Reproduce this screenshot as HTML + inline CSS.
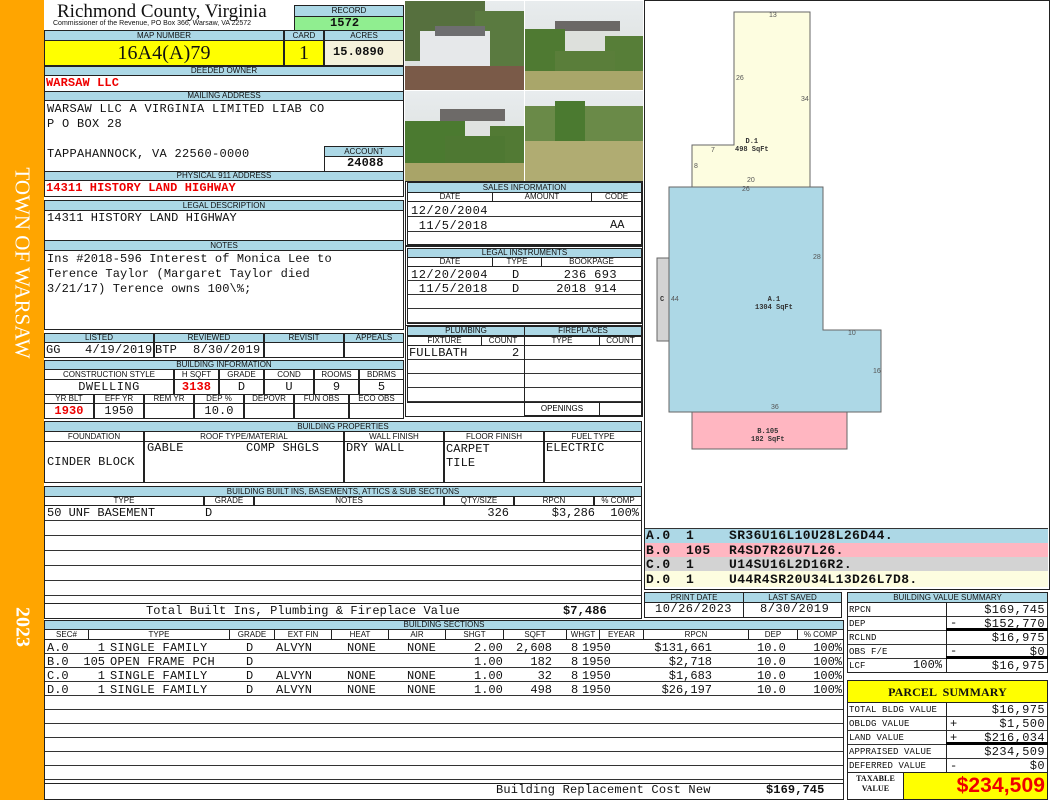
<!DOCTYPE html>
<html><head><meta charset="utf-8"><style>
*{margin:0;padding:0}
body{width:1050px;height:800px;position:relative;overflow:hidden;background:#fff;font-family:"Liberation Mono",monospace}
.a{position:absolute;box-sizing:border-box}
.h{position:absolute;box-sizing:border-box;background:#acd8e6;border:1px solid #222;font:8px/8px "Liberation Sans",sans-serif;text-align:center;color:#111;overflow:hidden}
.w{background:#fff}
.b{position:absolute;box-sizing:border-box;border:1px solid #222;background:#fff}
.t{position:absolute;font:12px/13px "Liberation Mono",monospace;letter-spacing:0.1px;white-space:pre;color:#111}
.r{color:#e00;font-weight:bold}
.s{position:absolute;font:bold 7px "Liberation Mono",monospace;color:#333;white-space:pre;text-align:center}
.n{position:absolute;font:7px "Liberation Sans",sans-serif;color:#555}
.row{position:absolute;left:0;width:1050px;height:14px}
.row span{position:absolute;font:12px/14px "Liberation Mono",monospace;white-space:pre;color:#111}
.rr{text-align:right}
</style></head><body>
<!-- sidebar -->
<div class="a" style="left:0;top:0;width:44px;height:800px;background:#ffa500"></div>
<div class="a" style="left:22px;top:263px;width:0;height:0"><div style="position:absolute;transform:translate(-50%,-50%) rotate(90deg);font:21px 'Liberation Serif',serif;color:#fff;white-space:nowrap">TOWN OF WARSAW</div></div>
<div class="a" style="left:22px;top:627px;width:0;height:0"><div style="position:absolute;transform:translate(-50%,-50%) rotate(90deg);font:bold 20px 'Liberation Serif',serif;color:#fff;white-space:nowrap">2023</div></div>

<!-- header -->
<div class="t" style="left:57px;top:2px;font:19px/20px 'Liberation Serif',serif;letter-spacing:0">Richmond County, Virginia</div>
<div class="t" style="left:53px;top:20px;font:7px/8px 'Liberation Sans',sans-serif;letter-spacing:0">Commissioner of the Revenue, PO Box 366, Warsaw, VA 22572</div>
<div class="h" style="left:294px;top:5px;width:110px;height:12px;line-height:10px">RECORD</div>
<div class="b" style="left:294px;top:16px;width:110px;height:15px;background:#90ee90"></div>
<div class="t" style="left:330px;top:17px;font-weight:bold">1572</div>

<div class="h" style="left:44px;top:30px;width:240px;height:11px;line-height:9px">MAP NUMBER</div>
<div class="h" style="left:284px;top:30px;width:40px;height:11px;line-height:9px">CARD</div>
<div class="h" style="left:324px;top:30px;width:80px;height:11px;line-height:9px">ACRES</div>
<div class="b" style="left:44px;top:40px;width:240px;height:26px;background:#ffff00"></div>
<div class="b" style="left:284px;top:40px;width:40px;height:26px;background:#ffff00"></div>
<div class="b" style="left:324px;top:40px;width:80px;height:26px;background:#f5f2dc"></div>
<div class="t" style="left:44px;width:240px;top:42px;font:20px/22px 'Liberation Serif',serif;text-align:center">16A4(A)79</div>
<div class="t" style="left:284px;width:40px;top:42px;font:20px/22px 'Liberation Serif',serif;text-align:center">1</div>
<div class="t" style="left:333px;top:46px;font-weight:bold;font-size:12px">15.0890</div>

<div class="h" style="left:44px;top:66px;width:360px;height:10px">DEEDED OWNER</div>
<div class="b" style="left:44px;top:75px;width:360px;height:17px"></div>
<div class="t r" style="left:46px;top:77px">WARSAW LLC</div>
<div class="h" style="left:44px;top:91px;width:360px;height:10px">MAILING ADDRESS</div>
<div class="b" style="left:44px;top:100px;width:360px;height:72px"></div>
<div class="t" style="left:47px;top:102px;line-height:15px;letter-spacing:0.3px">WARSAW LLC A VIRGINIA LIMITED LIAB CO
P O BOX 28

TAPPAHANNOCK, VA 22560-0000</div>
<div class="h" style="left:324px;top:146px;width:80px;height:11px;line-height:9px">ACCOUNT</div>
<div class="b" style="left:324px;top:156px;width:80px;height:16px"></div>
<div class="t" style="left:347px;top:157px;font-weight:bold">24088</div>
<div class="h" style="left:44px;top:171px;width:360px;height:10px">PHYSICAL 911 ADDRESS</div>
<div class="b" style="left:44px;top:180px;width:360px;height:17px"></div>
<div class="t r" style="left:46px;top:182px">14311 HISTORY LAND HIGHWAY</div>

<div class="h" style="left:44px;top:200px;width:360px;height:11px;line-height:9px">LEGAL DESCRIPTION</div>
<div class="b" style="left:44px;top:210px;width:360px;height:31px"></div>
<div class="t" style="left:47px;top:212px">14311 HISTORY LAND HIGHWAY</div>
<div class="h" style="left:44px;top:240px;width:360px;height:11px;line-height:9px">NOTES</div>
<div class="b" style="left:44px;top:250px;width:360px;height:80px"></div>
<div class="t" style="left:47px;top:252px;line-height:15px">Ins #2018-596 Interest of Monica Lee to
Terence Taylor (Margaret Taylor died
3/21/17) Terence owns 100\%;</div>

<!-- listed -->
<div class="h" style="left:44px;top:333px;width:110px;height:10px">LISTED</div>
<div class="h" style="left:154px;top:333px;width:110px;height:10px">REVIEWED</div>
<div class="h" style="left:264px;top:333px;width:80px;height:10px">REVISIT</div>
<div class="h" style="left:344px;top:333px;width:60px;height:10px">APPEALS</div>
<div class="b" style="left:44px;top:342px;width:110px;height:16px"></div>
<div class="b" style="left:154px;top:342px;width:110px;height:16px"></div>
<div class="b" style="left:264px;top:342px;width:80px;height:16px"></div>
<div class="b" style="left:344px;top:342px;width:60px;height:16px"></div>
<div class="t" style="left:46px;top:344px">GG</div>
<div class="t" style="left:85px;top:344px;letter-spacing:0.3px">4/19/2019</div>
<div class="t" style="left:155px;top:344px">BTP</div>
<div class="t" style="left:193px;top:344px;letter-spacing:0.3px">8/30/2019</div>

<!-- building info -->
<div class="h" style="left:44px;top:360px;width:360px;height:10px">BUILDING INFORMATION</div>
<div class="h w" style="left:44px;top:369px;width:130px;height:11px;line-height:9px">CONSTRUCTION STYLE</div>
<div class="h w" style="left:174px;top:369px;width:45px;height:11px;line-height:9px">H SQFT</div>
<div class="h w" style="left:219px;top:369px;width:45px;height:11px;line-height:9px">GRADE</div>
<div class="h w" style="left:264px;top:369px;width:50px;height:11px;line-height:9px">COND</div>
<div class="h w" style="left:314px;top:369px;width:45px;height:11px;line-height:9px">ROOMS</div>
<div class="h w" style="left:359px;top:369px;width:45px;height:11px;line-height:9px">BDRMS</div>
<div class="b" style="left:44px;top:379px;width:130px;height:16px"></div>
<div class="b" style="left:174px;top:379px;width:45px;height:16px"></div>
<div class="b" style="left:219px;top:379px;width:45px;height:16px"></div>
<div class="b" style="left:264px;top:379px;width:50px;height:16px"></div>
<div class="b" style="left:314px;top:379px;width:45px;height:16px"></div>
<div class="b" style="left:359px;top:379px;width:45px;height:16px"></div>
<div class="t" style="left:44px;width:130px;text-align:center;top:381px;letter-spacing:0.5px">DWELLING</div>
<div class="t r" style="left:174px;width:45px;text-align:center;top:381px">3138</div>
<div class="t" style="left:219px;width:45px;text-align:center;top:381px">D</div>
<div class="t" style="left:264px;width:50px;text-align:center;top:381px">U</div>
<div class="t" style="left:314px;width:45px;text-align:center;top:381px">9</div>
<div class="t" style="left:359px;width:45px;text-align:center;top:381px">5</div>
<div class="h w" style="left:44px;top:394px;width:50px;height:10px">YR BLT</div>
<div class="h w" style="left:94px;top:394px;width:50px;height:10px">EFF YR</div>
<div class="h w" style="left:144px;top:394px;width:50px;height:10px">REM YR</div>
<div class="h w" style="left:194px;top:394px;width:50px;height:10px">DEP %</div>
<div class="h w" style="left:244px;top:394px;width:50px;height:10px">DEPOVR</div>
<div class="h w" style="left:294px;top:394px;width:55px;height:10px">FUN OBS</div>
<div class="h w" style="left:349px;top:394px;width:55px;height:10px">ECO OBS</div>
<div class="b" style="left:44px;top:403px;width:50px;height:16px"></div>
<div class="b" style="left:94px;top:403px;width:50px;height:16px"></div>
<div class="b" style="left:144px;top:403px;width:50px;height:16px"></div>
<div class="b" style="left:194px;top:403px;width:50px;height:16px"></div>
<div class="b" style="left:244px;top:403px;width:50px;height:16px"></div>
<div class="b" style="left:294px;top:403px;width:55px;height:16px"></div>
<div class="b" style="left:349px;top:403px;width:55px;height:16px"></div>
<div class="t r" style="left:44px;width:50px;text-align:center;top:405px">1930</div>
<div class="t" style="left:94px;width:50px;text-align:center;top:405px">1950</div>
<div class="t" style="left:194px;width:50px;text-align:center;top:405px">10.0</div>

<!-- building properties -->
<div class="h" style="left:44px;top:421px;width:598px;height:11px;line-height:9px">BUILDING PROPERTIES</div>
<div class="h w" style="left:44px;top:431px;width:100px;height:11px;line-height:9px">FOUNDATION</div>
<div class="h w" style="left:144px;top:431px;width:200px;height:11px;line-height:9px">ROOF TYPE/MATERIAL</div>
<div class="h w" style="left:344px;top:431px;width:100px;height:11px;line-height:9px">WALL FINISH</div>
<div class="h w" style="left:444px;top:431px;width:100px;height:11px;line-height:9px">FLOOR FINISH</div>
<div class="h w" style="left:544px;top:431px;width:98px;height:11px;line-height:9px">FUEL TYPE</div>
<div class="b" style="left:44px;top:441px;width:100px;height:42px"></div>
<div class="b" style="left:144px;top:441px;width:200px;height:42px"></div>
<div class="b" style="left:344px;top:441px;width:100px;height:42px"></div>
<div class="b" style="left:444px;top:441px;width:100px;height:42px"></div>
<div class="b" style="left:544px;top:441px;width:98px;height:42px"></div>
<div class="t" style="left:47px;top:456px">CINDER BLOCK</div>
<div class="t" style="left:147px;top:442px">GABLE</div>
<div class="t" style="left:246px;top:442px">COMP SHGLS</div>
<div class="t" style="left:346px;top:442px">DRY WALL</div>
<div class="t" style="left:446px;top:442px;line-height:14px">CARPET
TILE</div>
<div class="t" style="left:546px;top:442px">ELECTRIC</div>

<!-- built ins -->
<div class="h" style="left:44px;top:486px;width:598px;height:11px;line-height:9px">BUILDING BUILT INS, BASEMENTS, ATTICS &amp; SUB SECTIONS</div>
<div class="h w" style="left:44px;top:496px;width:160px;height:10px">TYPE</div>
<div class="h w" style="left:204px;top:496px;width:50px;height:10px">GRADE</div>
<div class="h w" style="left:254px;top:496px;width:190px;height:10px">NOTES</div>
<div class="h w" style="left:444px;top:496px;width:70px;height:10px">QTY/SIZE</div>
<div class="h w" style="left:514px;top:496px;width:80px;height:10px">RPCN</div>
<div class="h w" style="left:594px;top:496px;width:48px;height:10px">% COMP</div>
<div class="b" style="left:44px;top:505px;width:598px;height:99px;background:repeating-linear-gradient(#fff 0,#fff 14px,#333 14px,#333 15px)"></div>
<div class="row" style="top:506px"><span style="left:47px">50 UNF BASEMENT</span><span style="left:205px">D</span><span class="rr" style="left:400px;width:109px">326</span><span class="rr" style="left:500px;width:95px">$3,286</span><span class="rr" style="left:580px;width:59px">100%</span></div>
<div class="b" style="left:44px;top:603px;width:598px;height:16px"></div>
<div class="t" style="left:146px;top:605px">Total Built Ins, Plumbing &amp; Fireplace Value</div>
<div class="t" style="left:563px;top:605px;font-weight:bold">$7,486</div>

<!-- building sections -->
<div class="h" style="left:44px;top:620px;width:800px;height:10px">BUILDING SECTIONS</div>
<div class="h w" style="left:44px;top:629px;width:45px;height:11px;line-height:9px">SEC#</div>
<div class="h w" style="left:88px;top:629px;width:142px;height:11px;line-height:9px">TYPE</div>
<div class="h w" style="left:229px;top:629px;width:46px;height:11px;line-height:9px">GRADE</div>
<div class="h w" style="left:274px;top:629px;width:58px;height:11px;line-height:9px">EXT FIN</div>
<div class="h w" style="left:331px;top:629px;width:58px;height:11px;line-height:9px">HEAT</div>
<div class="h w" style="left:388px;top:629px;width:58px;height:11px;line-height:9px">AIR</div>
<div class="h w" style="left:445px;top:629px;width:59px;height:11px;line-height:9px">SHGT</div>
<div class="h w" style="left:503px;top:629px;width:64px;height:11px;line-height:9px">SQFT</div>
<div class="h w" style="left:566px;top:629px;width:34px;height:11px;line-height:9px">WHGT</div>
<div class="h w" style="left:599px;top:629px;width:45px;height:11px;line-height:9px">EYEAR</div>
<div class="h w" style="left:643px;top:629px;width:106px;height:11px;line-height:9px">RPCN</div>
<div class="h w" style="left:748px;top:629px;width:50px;height:11px;line-height:9px">DEP</div>
<div class="h w" style="left:797px;top:629px;width:47px;height:11px;line-height:9px">% COMP</div>
<div class="b" style="left:44px;top:639px;width:800px;height:145px;background:repeating-linear-gradient(#fff 0,#fff 13px,#333 13px,#333 14px)"></div>
<div class="row" style="top:641px"><span style="left:47px">A.0</span><span class="rr" style="left:70px;width:35px">1</span><span style="left:110px;letter-spacing:0.3px">SINGLE FAMILY</span><span style="left:246px">D</span><span style="left:276px">ALVYN</span><span style="left:347px">NONE</span><span style="left:407px">NONE</span><span style="left:474px">2.00</span><span class="rr" style="left:500px;width:52px">2,608</span><span style="left:571px">8</span><span style="left:582px">1950</span><span class="rr" style="left:620px;width:92px">$131,661</span><span style="left:757px">10.0</span><span class="rr" style="left:790px;width:52px">100%</span></div>
<div class="row" style="top:655px"><span style="left:47px">B.0</span><span class="rr" style="left:70px;width:35px">105</span><span style="left:110px;letter-spacing:0.3px">OPEN FRAME PCH</span><span style="left:246px">D</span><span style="left:474px">1.00</span><span class="rr" style="left:500px;width:52px">182</span><span style="left:571px">8</span><span style="left:582px">1950</span><span class="rr" style="left:620px;width:92px">$2,718</span><span style="left:757px">10.0</span><span class="rr" style="left:790px;width:52px">100%</span></div>
<div class="row" style="top:669px"><span style="left:47px">C.0</span><span class="rr" style="left:70px;width:35px">1</span><span style="left:110px;letter-spacing:0.3px">SINGLE FAMILY</span><span style="left:246px">D</span><span style="left:276px">ALVYN</span><span style="left:347px">NONE</span><span style="left:407px">NONE</span><span style="left:474px">1.00</span><span class="rr" style="left:500px;width:52px">32</span><span style="left:571px">8</span><span style="left:582px">1950</span><span class="rr" style="left:620px;width:92px">$1,683</span><span style="left:757px">10.0</span><span class="rr" style="left:790px;width:52px">100%</span></div>
<div class="row" style="top:683px"><span style="left:47px">D.0</span><span class="rr" style="left:70px;width:35px">1</span><span style="left:110px;letter-spacing:0.3px">SINGLE FAMILY</span><span style="left:246px">D</span><span style="left:276px">ALVYN</span><span style="left:347px">NONE</span><span style="left:407px">NONE</span><span style="left:474px">1.00</span><span class="rr" style="left:500px;width:52px">498</span><span style="left:571px">8</span><span style="left:582px">1950</span><span class="rr" style="left:620px;width:92px">$26,197</span><span style="left:757px">10.0</span><span class="rr" style="left:790px;width:52px">100%</span></div>
<div class="b" style="left:44px;top:783px;width:800px;height:17px"></div>
<div class="t" style="left:496px;top:784px;letter-spacing:0.2px">Building Replacement Cost New</div>
<div class="t" style="left:766px;top:784px;font-weight:bold">$169,745</div>

<!-- photos -->
<svg class="a" style="left:405px;top:1px" width="238" height="180" viewBox="0 0 238 180">
<defs><linearGradient id="sk" x1="0" y1="0" x2="0" y2="1"><stop offset="0" stop-color="#e8ecee"/><stop offset="1" stop-color="#d8dcd8"/></linearGradient></defs>
<rect width="238" height="180" fill="#fff"/>
<rect x="0" y="0" width="119" height="89" fill="url(#sk)"/>
<rect x="0" y="0" width="80" height="60" fill="#56703e"/>
<rect x="70" y="10" width="49" height="60" fill="#5a7a40"/>
<rect x="15" y="30" width="70" height="35" fill="#e6e8ea"/><rect x="30" y="25" width="50" height="10" fill="#6e6e70"/>
<rect x="0" y="65" width="119" height="24" fill="#7a5a48"/>
<rect x="120" y="0" width="118" height="89" fill="url(#sk)"/>
<rect x="155" y="22" width="60" height="30" fill="#dde0dc"/><rect x="150" y="20" width="65" height="10" fill="#6b6866"/>
<rect x="120" y="28" width="40" height="45" fill="#4f7a32"/><rect x="200" y="35" width="38" height="38" fill="#577e38"/><rect x="150" y="50" width="60" height="22" fill="#5a7e3a"/>
<rect x="120" y="70" width="118" height="19" fill="#a9a66a"/>
<rect x="0" y="90" width="119" height="90" fill="url(#sk)"/>
<rect x="40" y="112" width="60" height="30" fill="#e0e2e0"/><rect x="35" y="108" width="65" height="12" fill="#6d6a68"/>
<rect x="0" y="120" width="60" height="45" fill="#4b7a30"/><rect x="85" y="125" width="34" height="40" fill="#527a34"/><rect x="40" y="135" width="60" height="30" fill="#4e7832"/>
<rect x="0" y="162" width="119" height="18" fill="#a9a468"/>
<rect x="120" y="90" width="118" height="90" fill="url(#sk)"/>
<rect x="120" y="105" width="118" height="35" fill="#6a8a48"/><rect x="150" y="100" width="30" height="40" fill="#4b7a30"/>
<rect x="120" y="140" width="118" height="40" fill="#b0ac72"/>
<rect x="119" y="0" width="1" height="180" fill="#fff"/><rect x="0" y="89" width="238" height="1" fill="#fff"/>
</svg>

<!-- sales -->
<div class="b" style="left:405px;top:181px;width:238px;height:65px"></div>
<div class="h" style="left:407px;top:182px;width:235px;height:11px;line-height:9px">SALES INFORMATION</div>
<div class="h w" style="left:407px;top:192px;width:86px;height:10px">DATE</div>
<div class="h w" style="left:492px;top:192px;width:100px;height:10px">AMOUNT</div>
<div class="h w" style="left:591px;top:192px;width:51px;height:10px">CODE</div>
<div class="b" style="left:407px;top:201px;width:235px;height:44px;background:repeating-linear-gradient(#fff 0,#fff 14px,#333 14px,#333 15px)"></div>
<div class="t" style="left:411px;top:204px;line-height:15px;letter-spacing:0.5px">12/20/2004
 11/5/2018</div>
<div class="t" style="left:610px;top:219px">AA</div>

<div class="b" style="left:405px;top:246px;width:238px;height:80px"></div>
<div class="h" style="left:407px;top:248px;width:235px;height:10px">LEGAL INSTRUMENTS</div>
<div class="h w" style="left:407px;top:257px;width:86px;height:10px">DATE</div>
<div class="h w" style="left:492px;top:257px;width:50px;height:10px">TYPE</div>
<div class="h w" style="left:541px;top:257px;width:101px;height:10px">BOOKPAGE</div>
<div class="b" style="left:407px;top:266px;width:235px;height:58px;background:repeating-linear-gradient(#fff 0,#fff 13px,#333 13px,#333 14px)"></div>
<div class="t" style="left:411px;top:268px;line-height:14px;letter-spacing:0.5px">12/20/2004
 11/5/2018</div>
<div class="t" style="left:512px;top:268px;line-height:14px">D
D</div>
<div class="t" style="left:540px;top:268px;line-height:14px;width:77px;text-align:right;letter-spacing:0.4px">236 693
2018 914</div>

<div class="b" style="left:405px;top:325px;width:238px;height:92px"></div>
<div class="h" style="left:407px;top:326px;width:118px;height:10px">PLUMBING</div>
<div class="h" style="left:524px;top:326px;width:118px;height:10px">FIREPLACES</div>
<div class="h w" style="left:407px;top:336px;width:75px;height:10px">FIXTURE</div>
<div class="h w" style="left:481px;top:336px;width:44px;height:10px">COUNT</div>
<div class="h w" style="left:524px;top:336px;width:76px;height:10px">TYPE</div>
<div class="h w" style="left:599px;top:336px;width:43px;height:10px">COUNT</div>
<div class="b" style="left:407px;top:345px;width:118px;height:58px;background:repeating-linear-gradient(#fff 0,#fff 13px,#333 13px,#333 14px)"></div>
<div class="b" style="left:524px;top:345px;width:118px;height:58px;background:repeating-linear-gradient(#fff 0,#fff 13px,#333 13px,#333 14px)"></div>
<div class="b" style="left:524px;top:402px;width:76px;height:14px;font:8px/12px 'Liberation Sans',sans-serif;text-align:center">OPENINGS</div>
<div class="b" style="left:599px;top:402px;width:43px;height:14px"></div>
<div class="t" style="left:409px;top:347px">FULLBATH</div>
<div class="t" style="left:512px;top:347px">2</div>

<!-- sketch -->
<div class="b" style="left:644px;top:0;width:406px;height:590px;background:transparent"></div>
<svg class="a" style="left:644px;top:0" width="406" height="528" viewBox="644 0 406 528">
<polygon points="734,12 810,12 810,187 692,187 692,145 734,145" fill="#fdfde0" stroke="#666"/>
<polygon points="669,187 823,187 823,330 881,330 881,412 669,412" fill="#add8e6" stroke="#666"/>
<rect x="692" y="412" width="155" height="37" fill="#ffb6c1" stroke="#666"/>
<rect x="657" y="258" width="12" height="83" fill="#d3d3d3" stroke="#666"/>
</svg>
<div class="n" style="left:769px;top:12px">13</div>
<div class="n" style="left:736px;top:75px">26</div>
<div class="n" style="left:801px;top:96px">34</div>
<div class="n" style="left:711px;top:147px">7</div>
<div class="n" style="left:694px;top:163px">8</div>
<div class="n" style="left:747px;top:177px">20</div>
<div class="n" style="left:742px;top:186px">26</div>
<div class="n" style="left:813px;top:254px">28</div>
<div class="n" style="left:671px;top:296px">44</div>
<div class="n" style="left:848px;top:330px">10</div>
<div class="n" style="left:873px;top:368px">16</div>
<div class="n" style="left:771px;top:404px">36</div>
<div class="s" style="left:660px;top:296px">C</div>
<div class="s" style="left:735px;top:138px">D.1
498 SqFt</div>
<div class="s" style="left:755px;top:296px">A.1
1304 SqFt</div>
<div class="s" style="left:751px;top:428px">B.105
182 SqFt</div>
<div class="a" style="left:645px;top:529px;width:403px;height:15px;background:#add8e6"></div>
<div class="a" style="left:645px;top:543px;width:403px;height:15px;background:#ffb6c1"></div>
<div class="a" style="left:645px;top:557px;width:403px;height:15px;background:#d3d3d3"></div>
<div class="a" style="left:645px;top:571px;width:403px;height:16px;background:#fdfde0"></div>
<div class="a" style="left:645px;top:528px;width:403px;height:1px;background:#333"></div>
<div class="t" style="left:646px;top:529px;font:bold 13px/14.5px 'Liberation Mono',monospace;letter-spacing:0.4px">A.0
B.0
C.0
D.0</div>
<div class="t" style="left:686px;top:529px;font:bold 13px/14.5px 'Liberation Mono',monospace;letter-spacing:0.4px">1
105
1
1</div>
<div class="t" style="left:729px;top:529px;font:bold 13px/14.5px 'Liberation Mono',monospace;letter-spacing:0.4px">SR36U16L10U28L26D44.
R4SD7R26U7L26.
U14SU16L2D16R2.
U44R4SR20U34L13D26L7D8.</div>

<!-- print date -->
<div class="h" style="left:644px;top:592px;width:100px;height:11px;line-height:9px">PRINT DATE</div>
<div class="h" style="left:743px;top:592px;width:99px;height:11px;line-height:9px">LAST SAVED</div>
<div class="b" style="left:644px;top:602px;width:100px;height:16px"></div>
<div class="b" style="left:743px;top:602px;width:99px;height:16px"></div>
<div class="t" style="left:655px;top:603px;letter-spacing:0.5px">10/26/2023</div>
<div class="t" style="left:760px;top:603px;letter-spacing:0.5px">8/30/2019</div>

<!-- building value summary -->
<div class="h" style="left:847px;top:592px;width:201px;height:11px;line-height:9px">BUILDING VALUE SUMMARY</div>
<div class="b" style="left:847px;top:602px;width:100px;height:71px;background:repeating-linear-gradient(#fff 0,#fff 13px,#333 13px,#333 14px)"></div>
<div class="b" style="left:946px;top:602px;width:102px;height:71px;background:repeating-linear-gradient(#fff 0,#fff 13px,#333 13px,#333 14px)"></div>
<div class="a" style="left:946px;top:628px;width:102px;height:3px;background:#000"></div>
<div class="a" style="left:946px;top:656px;width:102px;height:3px;background:#000"></div>
<div class="t" style="left:849px;top:603px;font-size:9px;line-height:14px">RPCN
DEP
RCLND
OBS F/E
LCF</div>
<div class="t" style="left:913px;top:659px">100%</div>
<div class="t" style="left:949px;top:603px;line-height:14px;width:96px;text-align:right;letter-spacing:0.4px">$169,745
$152,770
$16,975
$0
$16,975</div>
<div class="t" style="left:950px;top:617px">-</div>
<div class="t" style="left:950px;top:645px">-</div>

<!-- parcel summary -->
<div class="b" style="left:847px;top:680px;width:201px;height:23px;background:#ffff00"></div>
<div class="t" style="left:847px;width:201px;text-align:center;top:685px;font:bold 12px 'Liberation Serif',serif">PARCEL  SUMMARY</div>
<div class="b" style="left:847px;top:702px;width:100px;height:71px;background:repeating-linear-gradient(#fff 0,#fff 13px,#333 13px,#333 14px)"></div>
<div class="b" style="left:946px;top:702px;width:102px;height:71px;background:repeating-linear-gradient(#fff 0,#fff 13px,#333 13px,#333 14px)"></div>
<div class="a" style="left:946px;top:742px;width:102px;height:3px;background:#000"></div>
<div class="t" style="left:849px;top:703px;font-size:9px;line-height:14px">TOTAL BLDG VALUE
OBLDG VALUE
LAND VALUE
APPRAISED VALUE
DEFERRED VALUE</div>
<div class="t" style="left:949px;top:703px;line-height:14px;width:96px;text-align:right;letter-spacing:0.4px">$16,975
$1,500
$216,034
$234,509
$0</div>
<div class="t" style="left:950px;top:717px;line-height:14px">+
+

-</div>
<div class="b" style="left:847px;top:772px;width:57px;height:28px"></div>
<div class="t" style="left:847px;width:57px;text-align:center;top:774px;font:bold 8px/10px 'Liberation Serif',serif">TAXABLE<br>VALUE</div>
<div class="b" style="left:903px;top:772px;width:145px;height:28px;background:#ffff00"></div>
<div class="t" style="left:903px;width:142px;text-align:right;top:774px;font:bold 21px/24px 'Liberation Sans',sans-serif;color:#e00">$234,509</div>
</body></html>
